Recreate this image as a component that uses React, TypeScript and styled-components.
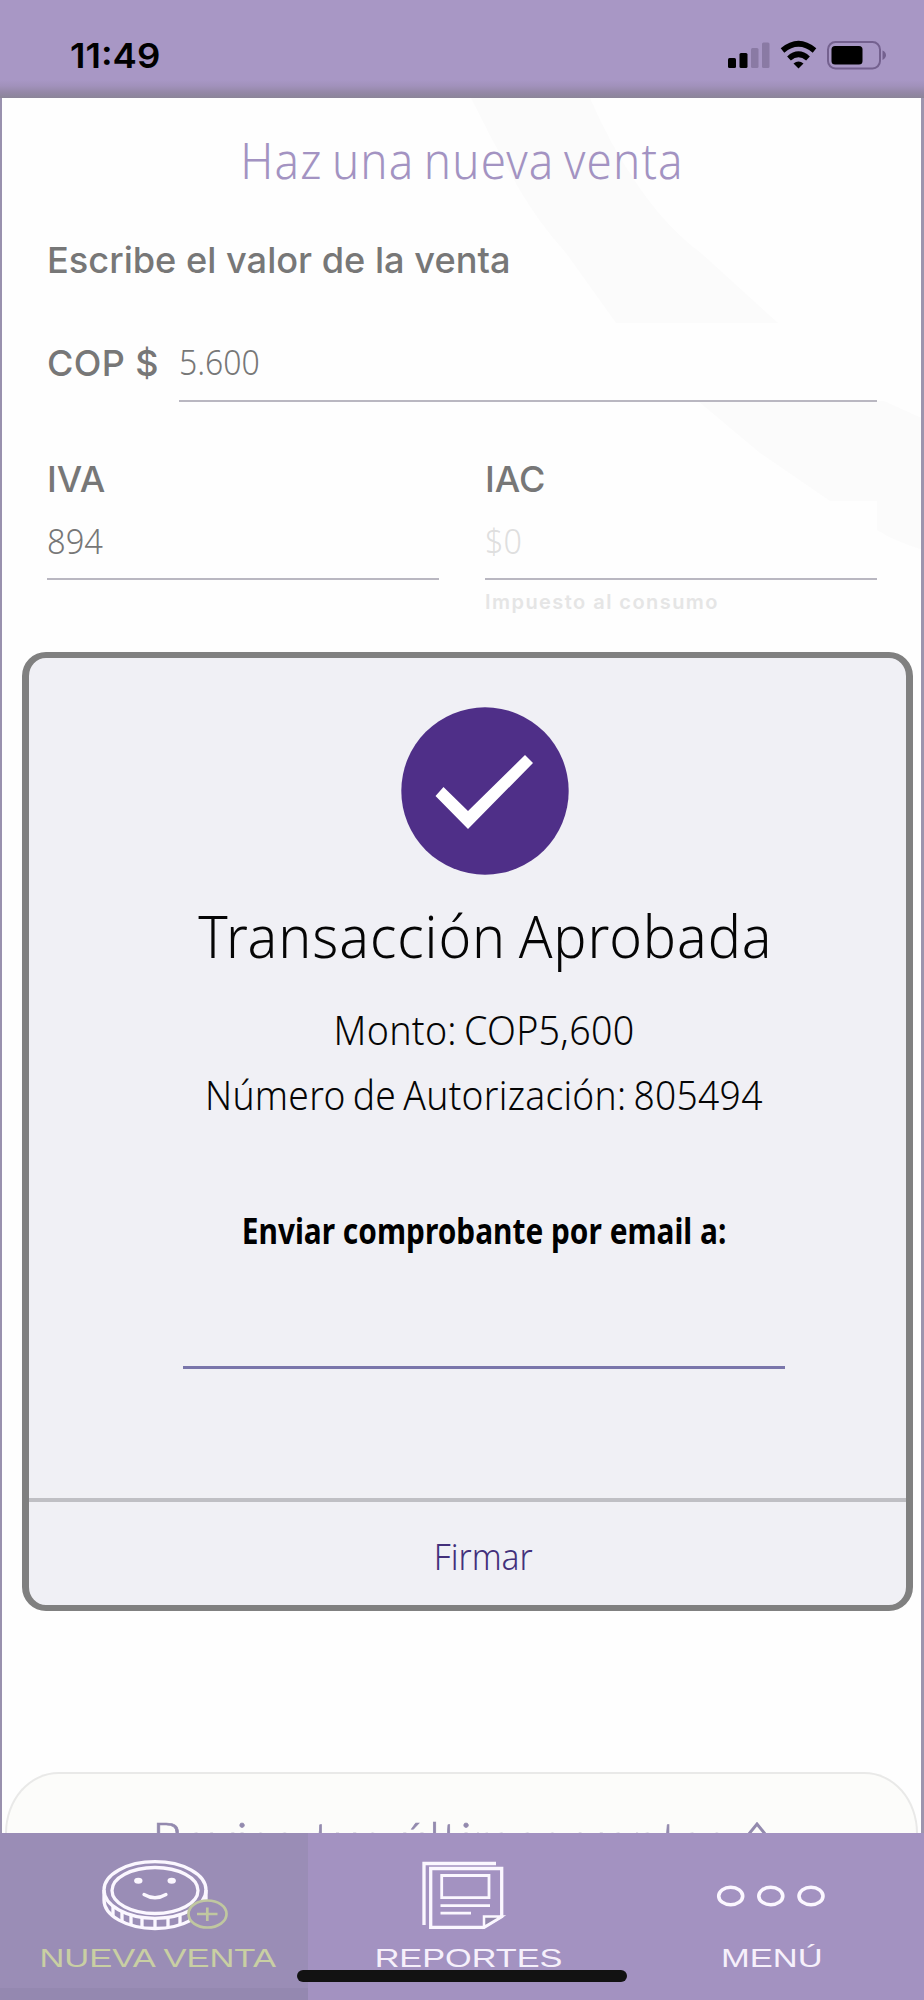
import React from "react";
import styled, { createGlobalStyle, css } from "styled-components";

const humanist = `"Noto Sans", "Open Sans", sans-serif`;
const system = `Inter, "Liberation Sans", sans-serif`;

const GlobalStyle = createGlobalStyle`
  *, *::before, *::after { box-sizing: border-box; }
  body { margin: 0; background: #fff; }
`;

/* Horizontal condensing or widening of a text run */
const stretch = css<{ $stretch?: number }>`
  display: block;
  white-space: nowrap;
  transform: scaleX(${(p) => p.$stretch ?? 1});
`;

const Screen = styled.div`
  position: relative;
  display: flex;
  flex-direction: column;
  width: 924px;
  height: 2000px;
  overflow: hidden;
  background: #a897c5;
`;

const StatusBar = styled.header`
  display: flex;
  justify-content: space-between;
  height: 98px;
  padding: 34px 37px 0 70px;
  background: linear-gradient(#a897c5 0 80px, #a191bb 86px, #9588a8 92px, #8b8598 98px);
`;

const Time = styled.time`
  ${stretch}
  transform-origin: left;
  font: 600 34.5px/44px ${system};
`;

const StatusIcons = styled.svg`
  display: block;
  width: 164px;
  height: 44px;
`;

const Sheet = styled.main`
  position: relative;
  display: flex;
  flex-direction: column;
  height: 1735px;
  overflow: hidden;
  border-left: 2px solid #9991ae;
  border-right: 3px solid #9c95ae;
  background: #fefefe;
`;

const Watermark = styled.svg`
  position: absolute;
  top: 0;
  left: -2px;
  width: 924px;
  height: 480px;
`;

const Form = styled.form`
  position: relative;
  display: flex;
  flex-direction: column;
  padding: 32px 44px 0 45px;
`;

const Title = styled.h1`
  ${stretch}
  margin: 0;
  text-align: center;
  font: 300 50px/60px ${humanist};
  letter-spacing: 1.3px;
  word-spacing: -4px;
  color: #a393c2;
`;

const Prompt = styled.p`
  ${stretch}
  transform-origin: left;
  margin: 48px 0 0;
  font: 500 36px/44px ${system};
  color: #777;
`;

const AmountRow = styled.div`
  display: flex;
  justify-content: space-between;
  margin-top: 56px;
`;

const Label = styled.label`
  display: block;
  font: 500 36px/44px ${system};
  color: #777;
`;

const CurrencyLabel = styled(Label)`
  line-height: 50px;
  letter-spacing: 0.4px;
`;

const Value = styled.div<{ $width?: number; $height: number; $muted?: boolean }>`
  width: ${(p) => (p.$width ? `${p.$width}px` : "100%")};
  height: ${(p) => p.$height}px;
  border-bottom: 2px solid #b9b7c1;
  font: 300 34px/48px ${humanist};
  color: ${(p) => (p.$muted ? "#dfdfdf" : "#777")};
`;

const ValueText = styled.span`
  ${stretch}
  transform-origin: left;
`;

const TaxRow = styled.div`
  display: grid;
  grid-template-columns: 392px 392px;
  justify-content: space-between;
  margin-top: 55px;
`;

const TaxField = styled.div`
  display: flex;
  flex-direction: column;
  gap: 16px;
`;

const Hint = styled.small`
  margin-top: -6px;
  font: 600 20px/24px ${system};
  letter-spacing: 1.45px;
  color: #e5e5e5;
`;

const RecentSales = styled.section`
  display: flex;
  gap: 8px;
  height: 61px;
  margin: auto 3px 0;
  padding: 35px 0 0 145px;
  overflow: hidden;
  border: 2px solid #e9e9e8;
  border-bottom: 0;
  border-radius: 58px 58px 0 0 / 66px 66px 0 0;
  background: #fcfcfa;
`;

const RecentTitle = styled.h2`
  width: 588px;
  margin: 0;
  white-space: nowrap;
  font: 300 50px/60px Lato, ${humanist};
  letter-spacing: 1.7px;
  -webkit-text-stroke: 0.7px #938aae;
  color: #938aae;
`;

const Chevron = styled.svg`
  width: 28px;
  height: 30px;
  margin: 13px 0 0 -5px;
`;

const Dialog = styled.div`
  position: absolute;
  top: 652px;
  left: 22px;
  display: flex;
  flex-direction: column;
  width: 891px;
  height: 959px;
  border: 6px solid #808080;
  border-left-width: 7px;
  border-right-width: 7px;
  border-radius: 24px;
  background: #f0f0f5;
`;

const DialogBody = styled.div`
  display: flex;
  flex-direction: column;
  align-items: center;
  height: 840px;
  padding: 49px 0 0 33px;
`;

const ApprovedMark = styled.svg`
  width: 168px;
  height: 168px;
  margin-left: 2px;
`;

const DialogTitle = styled.h2`
  ${stretch}
  margin: 25px 0 0 2px;
  font: 300 59px/70px ${humanist};
  letter-spacing: 1px;
  word-spacing: -3px;
  color: #050505;
`;

const Detail = styled.p<{ $gap: number }>`
  ${stretch}
  margin: ${(p) => p.$gap}px 0 0;
  font: 300 40px/50px ${humanist};
  letter-spacing: 0.3px;
  word-spacing: -3px;
  color: #050505;
`;

const EmailLabel = styled.label`
  ${stretch}
  margin-top: 88px;
  font: 700 35px/46px ${humanist};
  color: #000;
`;

const EmailInput = styled.input`
  width: 602px;
  height: 115px;
  padding: 0;
  border: 0;
  border-bottom: 3px solid #7a76ab;
  outline: 0;
  background: none;
`;

const SignButton = styled.button`
  display: flex;
  justify-content: center;
  flex: 1;
  padding: 3px 0 0 31px;
  border: 0;
  border-top: 4px solid #bfbfc4;
  border-radius: 0 0 17px 17px;
  background: none;
  font: 300 36px/50px ${humanist};
  color: #43307b;
`;

const SignText = styled.span`
  ${stretch}
  margin-top: 27px;
`;

const TabBar = styled.nav`
  display: grid;
  grid-template-columns: repeat(3, 308px);
  height: 167px;
  background: #a392c1;
`;

const Tab = styled.a<{ $active?: boolean }>`
  display: flex;
  flex-direction: column;
  align-items: center;
  color: ${(p) => (p.$active ? "#c9cfa3" : "#f6f0fb")};
  background: ${(p) => (p.$active ? "linear-gradient(#9a8db6 0 155px, #9488b0 155px)" : "none")};
`;

const TabIcon = styled.svg`
  display: block;
  width: 308px;
  height: 111px;
  fill: none;
  stroke: #fbf7ff;
  stroke-width: 3.3;
`;

const TabLabel = styled.span<{ $shift?: number }>`
  ${stretch}
  margin: -1px 0 0 ${(p) => p.$shift ?? 0}px;
  font: 400 25px/30px "Liberation Sans", Arial, sans-serif;
`;

const HomeIndicator = styled.div`
  position: absolute;
  bottom: 18px;
  left: 297px;
  width: 330px;
  height: 12px;
  border-radius: 6px;
  background: #121212;
`;

function DeviceStatus() {
  return (
    <StatusIcons viewBox="723 34 164 44">
      <rect x="728" y="58" width="8" height="10" rx="1.5" />
      <rect x="739.5" y="53" width="8" height="15" rx="1.5" />
      <rect x="751" y="48" width="7.5" height="20" rx="1.5" fill="#8a7aa4" />
      <rect x="762" y="42.5" width="7.5" height="25.5" rx="1.5" fill="#8a7aa4" />
      <g fill="none" stroke="#000" strokeWidth="5.6">
        <path d="M782.5 50.5Q798.5 37 814.5 50.5" />
        <path d="M789 58.5Q798.5 50 808 58.5" />
      </g>
      <path d="M793.5 63.5Q798.5 59.5 803.5 63.5L798.5 68.5Z" />
      <rect x="828" y="42" width="52" height="26.5" rx="7.5" fill="none" stroke="#74618f" strokeWidth="2" />
      <rect x="831.5" y="46" width="31" height="18.5" rx="3.5" />
      <path d="M882.5 50.5Q886 52 886 55.2Q886 58 882.5 60Z" fill="#74618f" />
    </StatusIcons>
  );
}

function CoinIcon() {
  return (
    <TabIcon viewBox="0 -1 308 111">
      <ellipse cx="155" cy="56" rx="51" ry="28.3" />
      <ellipse cx="155" cy="56.5" rx="43" ry="23" />
      <path d="M104 56V66A51 28.5 0 0 0 206 66V56" />
      <path d="M113 72V82M122 77V88M131 81V91M142 83V94M155 84V94M168 83V94M180 80V91M190 76V87" />
      <path d="M144 60.5Q155 67 166 60.5" strokeLinecap="round" />
      <g fill="#fbf7ff" stroke="none">
        <ellipse cx="138.3" cy="46.7" rx="4.2" ry="3" />
        <ellipse cx="171.7" cy="46.7" rx="4.2" ry="3" />
      </g>
      <g stroke="#c0c7a0" strokeWidth="2.7">
        <ellipse cx="207.5" cy="80" rx="19" ry="13.5" fill="#9a8db6" />
        <path d="M197 80H217.5M207.3 73.5V87" />
      </g>
    </TabIcon>
  );
}

function ReportIcon() {
  return (
    <TabIcon viewBox="0 0 308 111">
      <path d="M116 92V30.5H188" />
      <path d="M122.7 35.5H193.7V83.5L176 94.3H122.7Z" />
      <path d="M176 94V83.5H193.7Z" fill="#9388ac" strokeWidth="2.5" />
      <path d="M133.7 42.5H181V64.7H133.7ZM132.5 72.7H182M132.5 80.2H163" strokeWidth="2.8" />
    </TabIcon>
  );
}

function MenuIcon() {
  return (
    <TabIcon viewBox="0 0 308 111">
      {[114.7, 154.8, 195].map((cx) => (
        <ellipse key={cx} cx={cx} cy="63" rx="12" ry="8.7" strokeWidth="3.6" />
      ))}
    </TabIcon>
  );
}

export default function App() {
  return (
    <>
      <GlobalStyle />
      <Screen>
        <StatusBar>
          <Time $stretch={1.06}>11:49</Time>
          <DeviceStatus />
        </StatusBar>

        <Sheet>
          <Watermark viewBox="0 98 924 480" fill="#fbfbfb">
            <path d="M471 98H590Q610 145 639 187T701 253L778 323H616L566 253Q538 222 518 187T471 98Z" />
            <path d="M698 401H884L924 419V550Q898 543 877 530V501H830L760 453Z" />
          </Watermark>
          <Form>
            <Title $stretch={0.914}>Haz una nueva venta</Title>
            <Prompt $stretch={1.005}>Escribe el valor de la venta</Prompt>
            <AmountRow>
              <CurrencyLabel>COP $</CurrencyLabel>
              <Value $width={698} $height={64}>
                <ValueText $stretch={0.94}>5.600</ValueText>
              </Value>
            </AmountRow>
            <TaxRow>
              <TaxField>
                <Label>IVA</Label>
                <Value $height={63}>
                  <ValueText $stretch={0.96}>894</ValueText>
                </Value>
              </TaxField>
              <TaxField>
                <Label>IAC</Label>
                <Value $height={63} $muted>
                  <ValueText $stretch={0.95}>$0</ValueText>
                </Value>
                <Hint>Impuesto al consumo</Hint>
              </TaxField>
            </TaxRow>
          </Form>
          <RecentSales>
            <RecentTitle>Revisa tus últimas ventas</RecentTitle>
            <Chevron viewBox="0 0 28 30" fill="none" stroke="#938aae" strokeWidth="3">
              <path d="M1 18L14 2L27 18" />
            </Chevron>
          </RecentSales>
        </Sheet>

        <TabBar>
          <Tab $active>
            <CoinIcon />
            <TabLabel $stretch={1.38} $shift={7}>NUEVA VENTA</TabLabel>
          </Tab>
          <Tab>
            <ReportIcon />
            <TabLabel $stretch={1.37} $shift={14}>REPORTES</TabLabel>
          </Tab>
          <Tab>
            <MenuIcon />
            <TabLabel $stretch={1.38} $shift={3}>MENÚ</TabLabel>
          </Tab>
        </TabBar>

        <Dialog role="dialog">
          <DialogBody>
            <ApprovedMark viewBox="402 707 168 168">
              <circle cx="486" cy="791" r="83.7" fill="#4f2f88" />
              <path d="M436.5 796L444.5 787L469 811L526 755L534 763L469 829Z" fill="#fff" />
            </ApprovedMark>
            <DialogTitle $stretch={0.94}>Transacción Aprobada</DialogTitle>
            <Detail $gap={35} $stretch={0.94}>Monto: COP5,600</Detail>
            <Detail $gap={15} $stretch={0.93}>Número de Autorización: 805494</Detail>
            <EmailLabel $stretch={0.853}>Enviar comprobante por email a:</EmailLabel>
            <EmailInput type="email" />
          </DialogBody>
          <SignButton>
            <SignText $stretch={0.93}>Firmar</SignText>
          </SignButton>
        </Dialog>
        <HomeIndicator />
      </Screen>
    </>
  );
}
